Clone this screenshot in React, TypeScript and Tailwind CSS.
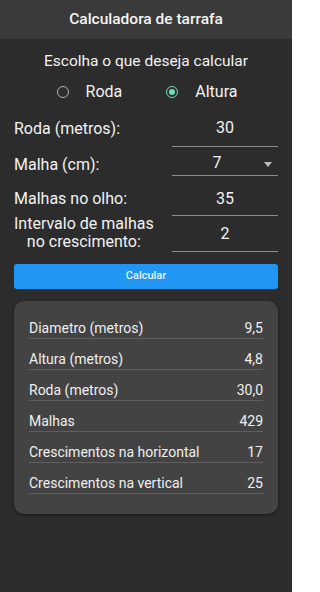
import React from "react";

const font = { fontFamily: "Roboto, 'Noto Sans', sans-serif" };

function Radio({ checked, label }: { checked: boolean; label: string }) {
  return (
    <div className="flex items-center gap-[17px]">
      {checked ? (
        <div className="w-[12px] h-[12px] rounded-full border-[1.5px] border-[#6fdcbb] flex items-center justify-center">
          <div className="w-[6px] h-[6px] rounded-full bg-[#6fdcbb]" />
        </div>
      ) : (
        <div className="w-[12px] h-[12px] rounded-full border-[1.5px] border-[#b5b5b5]" />
      )}
      <span className="text-[16px] leading-[20px] text-[#f2f2f2]">{label}</span>
    </div>
  );
}

function ResultRow({ label, value }: { label: string; value: string }) {
  return (
    <div className="h-[31px] flex items-end justify-between border-b border-[#5e5e5e] pb-[1px] text-[14px] leading-[17px] text-[#efefef]">
      <span>{label}</span>
      <span>{value}</span>
    </div>
  );
}

export default function App() {
  return (
    <div style={font} className="w-[292px] h-[592px] bg-[#2c2c2c] text-white overflow-hidden">
      <div className="h-[39px] bg-[#3a3a3a] flex items-center justify-center">
        <span className="text-[15.5px] font-medium text-[#f5f5f5]">Calculadora de tarrafa</span>
      </div>

      <div className="px-[14px]">
        <div className="mt-[12px] text-center text-[15.5px] leading-[20px] text-[#f2f2f2]">
          Escolha o que deseja calcular
        </div>
        <div className="mt-[11px] flex justify-center gap-[44px] pl-[2px]">
          <Radio checked={false} label="Roda" />
          <Radio checked={true} label="Altura" />
        </div>

        <div className="mt-[8px] flex flex-col text-[16px] leading-[20px] text-[#f2f2f2]">
          <div className="h-[37px] flex items-center justify-between">
            <span>Roda (metros):</span>
            <div className="w-[106px] h-[37px] border-b border-[#8c8c8c] flex items-center justify-center pb-[1px]">
              30
            </div>
          </div>
          <div className="h-[29px] flex items-center justify-between">
            <span className="pt-[7px]">Malha (cm):</span>
            <div className="w-[106px] h-[29px] border-b border-[#8c8c8c] flex items-center pt-[4px]">
              <span className="flex-1 text-center pr-[2px]">7</span>
              <svg width="8" height="5" viewBox="0 0 8 5" className="mr-[6px] mt-[2px]">
                <path d="M0 0 L8 0 L4 5 Z" fill="#bdbdbd" />
              </svg>
            </div>
          </div>
          <div className="h-[40px] flex items-center justify-between">
            <span className="pt-[6px]">Malhas no olho:</span>
            <div className="w-[106px] h-[40px] border-b border-[#8c8c8c] flex items-center justify-center pt-[7px]">
              35
            </div>
          </div>
          <div className="h-[36px] flex items-center justify-between">
            <div className="flex flex-col items-center leading-[18px] -mt-[2px]">
              <span>Intervalo de malhas</span>
              <span>no crescimento:</span>
            </div>
            <div className="w-[106px] h-[36px] border-b border-[#8c8c8c] flex items-center justify-center">
              2
            </div>
          </div>
        </div>

        <button className="mt-[12px] w-full h-[25px] rounded-[3px] bg-[#2196f3] text-[11px] font-medium text-[#eaf4ff] flex items-center justify-center">
          Calcular
        </button>

        <div className="mt-[12px] h-[213px] rounded-[10px] bg-[#434343] px-[15px] pt-[7px] shadow-[0_1px_3px_rgba(0,0,0,0.5)]">
          <ResultRow label="Diametro (metros)" value="9,5" />
          <ResultRow label="Altura (metros)" value="4,8" />
          <ResultRow label="Roda (metros)" value="30,0" />
          <ResultRow label="Malhas" value="429" />
          <ResultRow label="Crescimentos na horizontal" value="17" />
          <ResultRow label="Crescimentos na vertical" value="25" />
        </div>
      </div>
    </div>
  );
}
